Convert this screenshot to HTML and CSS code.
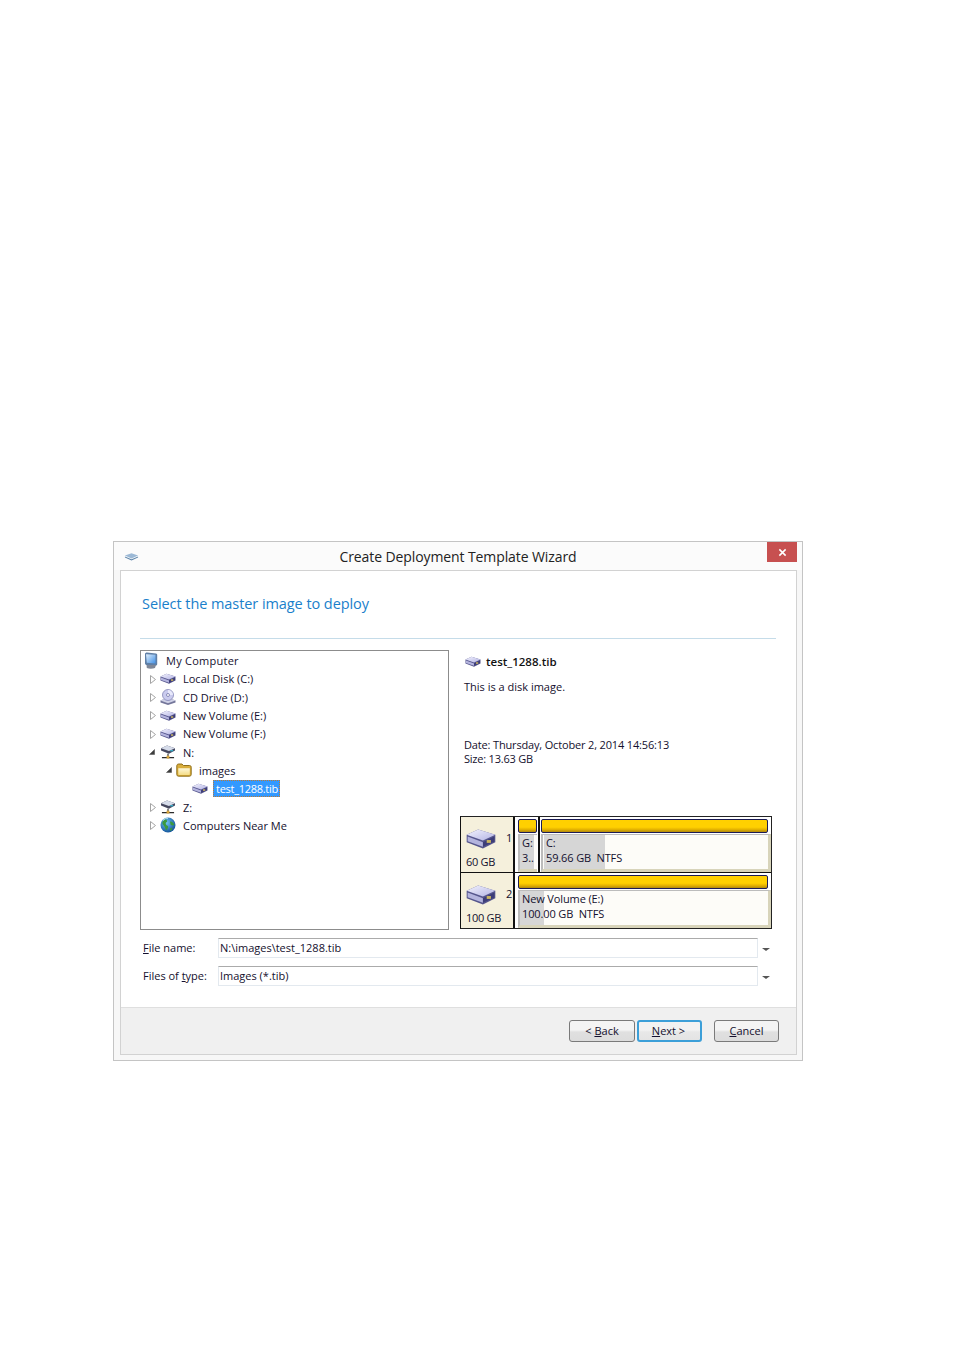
FILE: index.html
```html
<!DOCTYPE html>
<html lang="en">
<head>
<meta charset="utf-8">
<title>Create Deployment Template Wizard</title>
<link rel="stylesheet" href="styles.css">
</head>
<body>
<svg class="defs" width="0" height="0" aria-hidden="true">
  <defs>
    <linearGradient id="glass" x1="0" y1="0" x2="1" y2="1">
      <stop offset="0" stop-color="#e4f1fc"/>
      <stop offset="1" stop-color="#3f8fe6"/>
    </linearGradient>
    <linearGradient id="disktop" x1="0" y1="0" x2="1" y2="1">
      <stop offset="0" stop-color="#f3f3fd"/>
      <stop offset="1" stop-color="#b3b3e4"/>
    </linearGradient>
    <radialGradient id="sphere" cx=".4" cy=".35" r=".7">
      <stop offset="0" stop-color="#6fc3f2"/>
      <stop offset="1" stop-color="#0f4f98"/>
    </radialGradient>
    <linearGradient id="foldfill" x1="0" y1="0" x2="0" y2="1">
      <stop offset="0" stop-color="#fdf7d8"/>
      <stop offset="1" stop-color="#f5dd86"/>
    </linearGradient>
    <symbol id="disk" viewBox="0 0 16 11">
      <path d="M.5 3.500 6.500 .8 15.500 3.500V7.500L9 10.700 .5 7.500Z" fill="#55558c"/>
      <path d="M.5 3.500 6.500 .8 15.500 3.500 9 6.500Z" fill="url(#disktop)"/>
      <path d="M1 4.500 9 7.400V9.800L1 7Z" fill="#b4b4de"/>
      <path d="M9 7.400 15 4.500V7.100L9 9.800Z" fill="#3d3d78"/>
      <rect x="11" y="6.300" width="2.200" height="1.500" fill="#c9b560"/>
    </symbol>
    <symbol id="net" viewBox="0 0 16 15">
      <path d="M.5 3.500 7 .5 15.500 3.500V6L9 9.500 .5 6Z" fill="#46485f"/>
      <path d="M.5 3.500 7 .5 15.500 3.500 9 6.500Z" fill="#d6dcea"/>
      <rect x="10.500" y="5.500" width="3" height="1.300" fill="#35bcd6"/>
      <path d="M8 9.500V13M1.500 13.500H14.500" stroke="#2b2b2b" stroke-width="1.200" fill="none"/>
      <rect x="6.500" y="11.500" width="3" height="3" fill="#d9a53a"/>
    </symbol>
    <symbol id="cd" viewBox="0 0 16 16">
      <path d="M.5 11.500 7.500 8.500 15.500 11.500V13.500L8 16 .5 13.500Z" fill="#74769a"/>
      <path d="M.5 11.500 7.500 8.500 15.500 11.500 8 14.300Z" fill="#cfd1e6"/>
      <circle cx="8" cy="6" r="5.500" fill="#cacbee" stroke="#8486b6" stroke-width=".8"/>
      <path d="M8 1A5 5 0 0 1 13 6H9.500A1.500 1.500 0 0 0 8 4.500Z" fill="#e8e9fb"/>
      <circle cx="8" cy="6" r="1.500" fill="#fff" stroke="#6668a0" stroke-width=".7"/>
    </symbol>
    <symbol id="folder" viewBox="0 0 16 14">
      <path d="M.8 3C.8 1.800 1.500 1 2.500 1H6L7.500 2.500H13.500C14.500 2.500 15.200 3.200 15.200 4.200V11.500C15.200 12.500 14.500 13.200 13.500 13.200H2.500C1.500 13.200 .8 12.500 .8 11.500Z" fill="#d9ae3c" stroke="#86640f" stroke-width=".9"/>
      <path d="M2.300 5.300H13.800V11.300C13.800 11.700 13.500 12 13.200 12H2.900C2.500 12 2.300 11.700 2.300 11.300Z" fill="url(#foldfill)"/>
    </symbol>
    <symbol id="globe" viewBox="0 0 16 16">
      <circle cx="8" cy="8" r="7.500" fill="url(#sphere)"/>
      <path d="M5 2C3 3 2 5 2.500 7 4 8.500 5 10 6 13.500 7.500 12 8.500 10.500 8 9 6.500 8.500 5 7 6 5.500 7.500 5 8 3.500 5 2ZM10 4.500C11.500 4 13.500 5.500 14.500 7.500 13 9 11.500 8.500 10.500 7.500ZM10 11.500 12.500 10.500 11.500 13.500 10 13.500Z" fill="#3c9a3e"/>
      <path d="M3 3.500C4.500 2 6 1.300 8 1.200" stroke="#bfe8fa" stroke-width="1" fill="none"/>
    </symbol>
    <symbol id="pc" viewBox="0 0 14 17">
      <path d="M1 2C1 1 2 .5 3 .5L12 1.500C12.800 1.600 13.200 2 13.200 3V12C13.200 13 12.500 13.500 11.500 13.500L3 13C1.800 13 1 12.300 1 11.500Z" fill="#5f7fa6"/>
      <path d="M2 2.200 11.500 2.800V11.500L2.800 10.800Z" fill="url(#glass)"/>
      <path d="M2.500 13H12L11 16C8.500 17 5 17 2.800 16Z" fill="#7f8797"/>
    </symbol>
    <symbol id="chev" viewBox="0 0 16 8">
      <path d="M1 2.500 8 0 15 2.500 8 5.500Z" fill="#9cb9d6"/>
      <path d="M1 3.500 8 6.500 15 3.500 15 4.500 8 7.800 1 4.500Z" fill="#5f86ab"/>
    </symbol>
    <symbol id="tw-closed" viewBox="0 0 6 9">
      <path d="M.5 .5 5.500 4.500 .5 8.500Z" fill="#fff" stroke="#a3a3a3"/>
    </symbol>
    <symbol id="tw-open" viewBox="0 0 7 7">
      <path d="M6.500 .5V6.500H.5Z" fill="#3d3d3d" stroke="#3d3d3d" stroke-width=".5"/>
    </symbol>
  </defs>
</svg>

<main class="window">
  <header class="titlebar">
    <svg class="app-icon"><use href="#chev"/></svg>
    <h1 class="window-title">Create Deployment Template Wizard</h1>
    <button class="close" type="button" aria-label="Close">
      <svg viewBox="0 0 10 10" width="9" height="9"><path d="M1.500 1.500 8.500 8.500M8.500 1.500 1.500 8.500" stroke="#fff" stroke-width="1.700"/></svg>
    </button>
  </header>

  <section class="panel">
    <div class="content">
      <h2 class="step-title">Select the master image to deploy</h2>
      <div class="rule"></div>

      <div class="browser">
        <ul class="tree">
          <li class="row root"><svg class="ic ic-pc"><use href="#pc"/></svg><span>My Computer</span></li>
          <li class="row"><svg class="tw closed"><use href="#tw-closed"/></svg><svg class="ic ic-disk"><use href="#disk"/></svg><span>Local Disk (C:)</span></li>
          <li class="row"><svg class="tw closed"><use href="#tw-closed"/></svg><svg class="ic ic-round"><use href="#cd"/></svg><span>CD Drive (D:)</span></li>
          <li class="row"><svg class="tw closed"><use href="#tw-closed"/></svg><svg class="ic ic-disk"><use href="#disk"/></svg><span>New Volume (E:)</span></li>
          <li class="row"><svg class="tw closed"><use href="#tw-closed"/></svg><svg class="ic ic-disk"><use href="#disk"/></svg><span>New Volume (F:)</span></li>
          <li class="row"><svg class="tw open"><use href="#tw-open"/></svg><svg class="ic"><use href="#net"/></svg><span>N:</span></li>
          <li class="row lvl2"><svg class="tw open"><use href="#tw-open"/></svg><svg class="ic"><use href="#folder"/></svg><span>images</span></li>
          <li class="row lvl3"><svg class="ic ic-disk"><use href="#disk"/></svg><span class="selected">test_1288.tib</span></li>
          <li class="row"><svg class="tw closed"><use href="#tw-closed"/></svg><svg class="ic"><use href="#net"/></svg><span>Z:</span></li>
          <li class="row"><svg class="tw closed"><use href="#tw-closed"/></svg><svg class="ic ic-round"><use href="#globe"/></svg><span>Computers Near Me</span></li>
        </ul>

        <div class="preview">
          <div class="info">
            <div class="info-name"><svg class="ic ic-disk"><use href="#disk"/></svg><b>test_1288.tib</b></div>
            <p class="info-desc">This is a disk image.</p>
            <p class="info-date">Date: Thursday, October 2, 2014 14:56:13</p>
            <p class="info-size">Size: 13.63 GB</p>
          </div>

          <div class="disks">
            <div class="disk">
              <div class="disk-head">
                <svg class="disk-ic"><use href="#disk"/></svg>
                <span class="disk-no">1</span>
                <span class="disk-size">60 GB</span>
              </div>
              <div class="part part-g">
                <div class="bar"></div>
                <div class="vol"><div class="used used-g"></div><div class="vol-text">G:<br>3..</div></div>
              </div>
              <div class="part part-c">
                <div class="bar"></div>
                <div class="vol"><div class="used used-c"></div><div class="vol-text text-c">C:<br>59.66 GB&nbsp; NTFS</div></div>
              </div>
            </div>
            <div class="disk disk-2">
              <div class="disk-head">
                <svg class="disk-ic"><use href="#disk"/></svg>
                <span class="disk-no">2</span>
                <span class="disk-size">100 GB</span>
              </div>
              <div class="part part-e">
                <div class="bar"></div>
                <div class="vol"><div class="used used-e"></div><div class="vol-text">New Volume (E:)<br>100.00 GB&nbsp; NTFS</div></div>
              </div>
            </div>
          </div>
        </div>
      </div>

      <div class="field">
        <label class="field-label"><u>F</u>ile name:</label>
        <div class="input">N:\images\test_1288.tib</div>
        <span class="arrow"></span>
      </div>
      <div class="field">
        <label class="field-label">Files of <u>t</u>ype:</label>
        <div class="input">Images (*.tib)</div>
        <span class="arrow"></span>
      </div>
    </div>

    <footer class="actions">
      <button class="btn" type="button">&lt; <u>B</u>ack</button>
      <button class="btn next" type="button"><u>N</u>ext &gt;</button>
      <button class="btn cancel" type="button"><u>C</u>ancel</button>
    </footer>
  </section>
</main>
</body>
</html>
```
FILE: styles.css
```css
* { box-sizing: border-box; }
html, body { margin: 0; background: #fff; }
body {
  height: 1350px;
  padding: 541px 0 0 113px;
  font-family: "Open Sans", "Noto Sans", sans-serif;
  font-size: 11px;
  color: #14102e;
}
.defs { position: absolute; }

.window {
  width: 690px;
  height: 520px;
  border: 1px solid #c4c4c4;
  background: #f7f7f7;
  padding: 0 5px 5px 6px;
  display: flex;
  flex-direction: column;
}
.titlebar {
  height: 28px;
  display: flex;
  align-items: center;
  position: relative;
  background: #fbfbfb;
  margin: 0 -5px 0 -6px;
  padding: 0 0 0 10px;
}
.app-icon { width: 15px; height: 8px; margin-top: 1px; }
.window-title {
  position: absolute;
  left: 0; right: 0;
  top: 6px;
  margin: 0;
  text-align: center;
  font-size: 14px;
  font-weight: 400;
  line-height: 18px;
  color: #222;
  letter-spacing: -.1px;
}
.close {
  position: absolute;
  top: 0;
  right: 5px;
  width: 30px;
  height: 20px;
  border: 0;
  padding: 0;
  background: #c75050;
  display: flex;
  align-items: center;
  justify-content: center;
}

.panel {
  flex: 1;
  display: flex;
  flex-direction: column;
  background: #fff;
  border: 1px solid #d2d2d2;
}
.content { flex: 1; padding: 0 20px 0 19px; }
.step-title {
  margin: 22px 0 0 2px;
  height: 24px;
  font-size: 14.500px;
  font-weight: 400;
  line-height: 22px;
  letter-spacing: -.07px;
  color: #1a7fcb;
}
.rule { height: 1px; margin-top: 21px; background: #c5dce9; }

.browser { display: flex; margin-top: 11px; height: 280px; }
.tree {
  list-style: none;
  margin: 0;
  padding: 0;
  width: 309px;
  height: 280px;
  border: 1px solid #8c8c8c;
}
.row {
  height: 18.35px;
  display: flex;
  align-items: center;
  padding-left: 19px;
  position: relative;
  white-space: nowrap;
}
.row > span { margin-left: 7px; }
.root { padding-left: 3px; height: 18.5px; }
.root > span { margin-left: 8px; letter-spacing: .25px; }
.lvl2 { padding-left: 35px; }
.lvl2 > span { margin-left: 7px; }
.lvl3 { padding-left: 51px; }
.lvl3 > span { margin-left: 5px; }
.ic { width: 16px; height: 14px; flex: none; }
.ic-disk { height: 11px; }
.ic-round { height: 16px; }
.ic-pc { width: 14px; height: 17px; }
.tw { position: absolute; }
.tw.closed { left: 9px; top: 5px; width: 6px; height: 9px; }
.tw.open { left: 8px; top: 6px; width: 6px; height: 6px; }
.lvl2 .tw.open { left: 25px; }
.selected {
  background: #3399ff;
  color: #fff;
  padding: 0 2px 0 3px;
  height: 17px;
  line-height: 17px;
  letter-spacing: -.28px;
  outline: 1px dotted #c07a30;
  outline-offset: -1px;
}

.preview { width: 327px; display: flex; flex-direction: column; position: relative; }
.info { height: 166px; padding: 3px 0 0 15px; }
.info-name { display: flex; align-items: center; height: 16px; margin-left: 1px; font-size: 11.500px; }
.info-name b { margin-left: 5px; font-weight: 600; color: #111; }
.info p { margin: 0; line-height: 15px; }
.info-desc { padding-top: 10px; height: 41px; }
.info-date { margin-top: 24px !important; padding-top: 3px; letter-spacing: -.16px; }
.info-size { margin-top: -1px !important; letter-spacing: -.22px; }

.disks {
  margin-left: 11px;
  width: 312px;
  height: 113px;
  border: 1px solid #222;
  border-left-color: #111;
  display: flex;
  flex-direction: column;
  background: #111;
  gap: 1px;
}
.disk { flex: 1; display: flex; background: #fff; position: relative; min-height: 0; letter-spacing: -.12px; }
.disk-head {
  width: 54px;
  flex: none;
  background: #f5f0dc;
  border-right: 2px solid #111;
  position: relative;
}
.disk-ic { position: absolute; left: 4px; top: 11px; width: 32px; height: 21px; }
.disk-no { position: absolute; left: 45px; top: 13px; }
.disk-size { position: absolute; left: 5px; top: 37px; letter-spacing: -.3px; }
.part { padding: 2px 0 0 3px; display: flex; flex-direction: column; background: #fff; }
.part-g { width: 25px; flex: none; border-right: 2px solid #111; padding-right: 1px; }
.part-g .bar { margin-right: 0; }
.part-g .vol { border-right: 0; }
.part-c { flex: 1; padding-left: 1px; }
.part-e { flex: 1; }
.bar {
  height: 14px;
  flex: none;
  background: linear-gradient(#ffd000 0 60%, #e2b000 80%, #b08a10);
  border: 1px solid #1c1c55;
  border-radius: 2px;
  margin-right: 3px;
}
.vol {
  flex: 1;
  position: relative;
  background: #fdfcf8;
  margin-top: 1px;
  border-top: 1px solid #bcbcbc;
  border-left: 2px solid #bcbcbc;
  border-right: 3px solid #d8d4ba;
  border-bottom: 3px solid #d8d4ba;
  overflow: hidden;
}
.used { position: absolute; left: 0; top: 0; bottom: 0; background: #d6d6d6; }
.used-g { width: 14px; }
.used-c { left: 1px; width: 61px; }
.used-e { width: 24px; }
.vol-text { position: relative; padding: 0 0 0 2px; line-height: 15px; white-space: nowrap; }
.text-c { padding-left: 3px; }

.field { display: flex; align-items: center; height: 20px; margin-bottom: 8px; margin-left: 3px; }
.browser + .field { margin-top: 8px; }
.field-label { width: 75px; flex: none; padding-bottom: 2px; }
.input {
  width: 540px;
  height: 20px;
  line-height: 17px;
  padding-left: 1px;
  background: #fff;
  border: 1px solid #e3e9ef;
  border-top-color: #ababab;
  border-left-color: #e3e9ef;
}
.arrow {
  margin-left: 4px;
  margin-top: 2px;
  width: 0; height: 0;
  border-style: solid;
  border-width: 3px 4px 0;
  border-color: #555 transparent transparent;
}

.actions {
  height: 47px;
  flex: none;
  display: flex;
  align-items: flex-start;
  background: #f0f0f0;
  border-top: 1px solid #dfdfdf;
  padding: 12px 0 0 448px;
}
.btn {
  width: 66px;
  height: 22px;
  padding: 0 0 2px;
  font: inherit;
  color: #14102e;
  border: 1px solid #7a7a7a;
  border-radius: 3px;
  background: linear-gradient(#f4f4f4 45%, #e0e0e0 55%, #dcdcdc);
}
.next { margin-left: 2px; width: 65px; padding-right: 2px; border: 2px solid #3c9fd8; border-radius: 3px; background: linear-gradient(#f2f2f2 45%, #e8e8e8 55%, #e4e4e4); }
.cancel { margin-left: 12px; width: 65px; }
```
